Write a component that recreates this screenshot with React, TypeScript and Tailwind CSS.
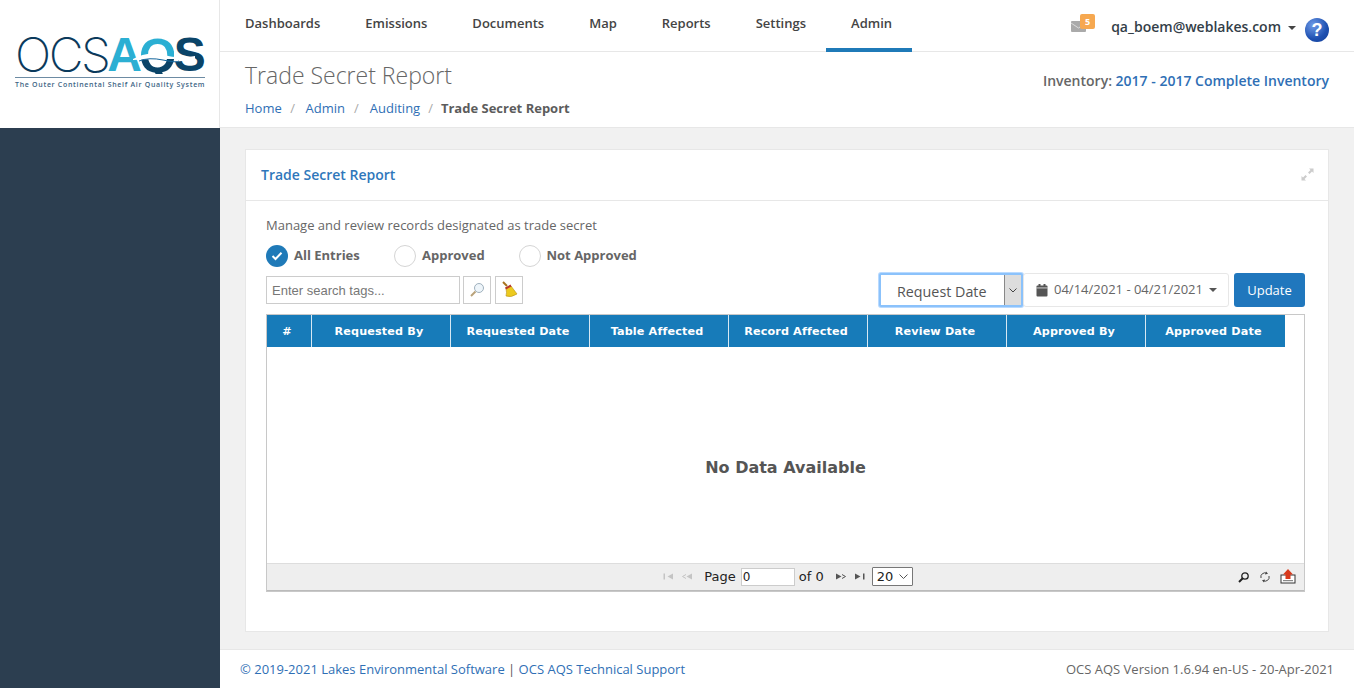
import React from "react";

const OS = { fontFamily: '"Open Sans", sans-serif' };
const DV = { fontFamily: '"DejaVu Sans", sans-serif' };

function Logo() {
  return (
    <div className="w-[190px] ml-[15px] pt-[34px]">
      <div className="relative flex items-center h-[42px]" style={{ fontFamily: '"Liberation Sans", sans-serif' }}>
        <span className="text-[48px] leading-[40px] text-[#0b3a5c] tracking-[-2.5px]" style={{ fontFamily: '"Inter", sans-serif', fontWeight: 200 }}>OCS</span>
        <span className="text-[48px] leading-[40px] font-bold tracking-[-3px] text-[#2bafd3] -ml-[1px]">A</span>
        <span className="text-[48px] leading-[40px] h-[38px] font-bold tracking-[-2.5px] bg-[linear-gradient(#2bafd3_60%,#0b4468_60%)] bg-clip-text text-transparent">Q</span>
        <span className="text-[48px] leading-[40px] font-bold tracking-[-1px] text-[#0b4468]">S</span>
        <svg className="absolute left-[118px] top-[16px]" width="62" height="14" viewBox="0 0 62 14">
          <path d="M0 9 Q14 1 30 5 T62 6 L62 9 Q44 9 30 9 T0 10Z" fill="#fff" />
          <path d="M6 11 Q16 7 30 10 T46 11" fill="none" stroke="#13659c" strokeWidth="1" />
        </svg>
      </div>
      <div className="mt-[1px] h-px bg-[#6d8ba3]" />
      <div className="mt-[2px] text-[7px] font-semibold leading-[10px] tracking-[0.7px] text-[#3d6484] whitespace-nowrap" style={OS}>The Outer Continental Shelf Air Quality System</div>
    </div>
  );
}

function Radio({ label, checked, cls }: { label: string; checked?: boolean; cls: string }) {
  return (
    <div className={`flex items-center ${cls}`}>
      {checked ? (
        <span className="w-[22px] h-[22px] rounded-full bg-[#1f7ab8] flex items-center justify-center">
          <svg width="12" height="10" viewBox="0 0 12 10"><path d="M1.5 5 L4.5 8 L10.5 1.8" fill="none" stroke="#fff" strokeWidth="2" /></svg>
        </span>
      ) : (
        <span className="w-[22px] h-[22px] rounded-full border border-[#d5d5d5] bg-white" />
      )}
      <span className="ml-[6px] text-[13px] font-bold text-[#666]">{label}</span>
    </div>
  );
}

const cols = [
  ["#", "w-[45px]"],
  ["Requested By", "w-[139px]"],
  ["Requested Date", "w-[139px]"],
  ["Table Affected", "w-[139px]"],
  ["Record Affected", "w-[139px]"],
  ["Review Date", "w-[139px]"],
  ["Approved By", "w-[139px]"],
  ["Approved Date", "w-[139px]"],
];

function PagerTri({ dir, last, dim }: { dir: "l" | "r"; last?: boolean; dim?: boolean }) {
  const c = dim ? "#c4c4c4" : "#555";
  return (
    <svg width="10" height="7" viewBox="0 0 10 7" className={dir === "l" ? "-scale-x-100" : ""}>
      <path d="M0 0.5 L5.5 3.5 L0 6.5Z" fill={c} />
      {last ? <rect x="8" y="0.5" width="1.5" height="6" fill={c} /> : <path d="M6 1.5 L9.5 3.5 L6 5.5" fill="none" stroke={c} strokeWidth="1" />}
    </svg>
  );
}

export default function App() {
  return (
    <div className="flex w-[1354px] h-[688px] overflow-hidden bg-[#f1f1f1] text-[#555]" style={OS}>
      <aside className="w-[220px] shrink-0 flex flex-col bg-[#2c3e50]">
        <div className="h-[128px] bg-white border-r border-[#e7e7e7]"><Logo /></div>
      </aside>
      <main className="flex-1 flex flex-col min-w-0">
        <div className="bg-white h-[128px] border-b border-[#e7e7e7]">
          <nav className="h-[52px] border-b border-[#e7e7e7] flex items-stretch pr-[25px]">
            <div className="flex pl-[5px]">
              {["Dashboards", "Emissions", "Documents", "Map", "Reports", "Settings"].map((n) => (
                <div key={n} className="px-[20px] h-[52px] pt-[14px] text-[13px] font-semibold leading-[18px] text-[#444] mr-[5px]">{n}</div>
              ))}
              <div className="pl-[25px] pr-[20px] -ml-[5px] h-[52px] pt-[14px] text-[13px] font-semibold leading-[18px] text-[#444] border-b-[4px] border-[#1f7ab8]">Admin</div>
            </div>
            <div className="ml-auto flex items-center pt-[2px]">
              <div className="relative w-[16px] h-[12px] mr-[24px]">
                <svg width="15" height="11" viewBox="0 0 15 11"><rect width="15" height="11" rx="1" fill="#aaa" /><path d="M0 2 L7.5 7 L15 2" fill="none" stroke="#e8e8e8" strokeWidth="0.8" /></svg>
                <span className="absolute -top-[7px] left-[9px] w-[15px] h-[15px] rounded-[2px] bg-[#f6a850] text-white text-[9px] font-bold leading-[15px] text-center">5</span>
              </div>
              <span className="text-[14px] font-semibold text-[#333e48]">qa_boem@weblakes.com</span>
              <span className="ml-[7px] border-x-[4px] border-x-transparent border-t-[4px] border-t-[#444] mt-[2px]" />
              <span className="ml-[9px] w-[24px] h-[24px] rounded-full bg-[radial-gradient(circle_at_35%_30%,#6f9ce8,#1d4fb0_60%,#143f96)] text-white text-[18px] font-bold leading-[24px] text-center mt-[6px]" style={{ fontFamily: '"Liberation Sans", sans-serif' }}>?</span>
            </div>
          </nav>
          <div className="flex justify-between pl-[25px] pr-[25px]">
            <div>
              <h1 className="text-[23px] font-light leading-[33px] text-[#666] mt-[7px]">Trade Secret Report</h1>
              <div className="flex items-center text-[13px] leading-[18px] mt-[7px]">
                <span className="text-[#2f6fb5]">Home</span><span className="mx-[8.5px] text-[#aaa]">/</span>
                <span className="ml-[2px] text-[#2f6fb5]">Admin</span><span className="mx-[9px] text-[#aaa]">/</span>
                <span className="ml-[2px] text-[#2f6fb5]">Auditing</span><span className="mx-[8px] text-[#aaa]">/</span>
                <span className="font-bold text-[#5c5c5c]">Trade Secret Report</span>
              </div>
            </div>
            <div className="text-[14px] font-semibold leading-[19px] mt-[19px]">
              <span className="text-[#666]">Inventory: </span><span className="text-[#2f6fb5]">2017 - 2017 Complete Inventory</span>
            </div>
          </div>
        </div>

        <div className="flex-1 px-[25px] pt-[21px]">
          <section className="h-[483px] bg-white border border-[#e7e7e7]">
            <div className="h-[51px] border-b border-[#e7e7e7] pl-[15px] pr-[14px] pb-[2px] flex items-center justify-between">
              <span className="text-[14px] font-semibold text-[#2f77bb]">Trade Secret Report</span>
              <svg width="13" height="13" viewBox="0 0 13 13" fill="#ccc"><path d="M8 0.5 H12.5 V5 L11 3.5 L8.5 6 L7 4.5 L9.5 2Z" /><path d="M5 12.5 H0.5 V8 L2 9.5 L4.5 7 L6 8.5 L3.5 11Z" /></svg>
            </div>
            <div className="px-[20px] pt-[15px]">
              <p className="text-[13px] leading-[18px] text-[#666]">Manage and review records designated as trade secret</p>
              <div className="flex mt-[11px] h-[22px]">
                <Radio label="All Entries" checked cls="w-[128px]" />
                <Radio label="Approved" cls="w-[124.5px]" />
                <Radio label="Not Approved" cls="" />
              </div>
              <div className="flex items-start justify-between mt-[6px] h-[41px] pr-[3px]">
                <div className="flex mt-[3px]">
                  <div className="w-[194px] h-[28px] border border-[#ccc] pl-[5px] text-[13px] leading-[28px] text-[#777]" style={{ fontFamily: '"Liberation Sans", sans-serif' }}>Enter search tags...</div>
                  <div className="ml-[3px] w-[28px] h-[28px] border border-[#ccc] flex items-center justify-center">
                    <svg width="16" height="16" viewBox="0 0 16 16"><circle cx="10" cy="6" r="4.5" fill="#eef5fa" stroke="#9fb0bd" /><path d="M6.5 9.5 L2 14" stroke="#b9a27a" strokeWidth="2" /></svg>
                  </div>
                  <div className="ml-[4px] w-[28px] h-[28px] border border-[#ccc] flex items-center justify-center">
                    <svg width="18" height="18" viewBox="0 0 18 18"><path d="M6 7 L11 5 L17 13 Q11 17 6 15 Q7 12 6 7Z" fill="#ecca1e" stroke="#b78f10" strokeWidth="0.6" /><path d="M5.5 7.5 L11 4.5" stroke="#b8382a" strokeWidth="2" /><path d="M7 5 L3 1" stroke="#a8741e" strokeWidth="2" /></svg>
                  </div>
                </div>
                <div className="flex items-center">
                  <div className="w-[144px] h-[34px] flex border-2 border-[#8bc2fb] rounded-[2px] shadow-[0_0_0_1px_#b9daff] bg-white">
                    <div className="flex-1 text-[14.3px] text-[#555] pl-[16px] leading-[34px]">Request Date</div>
                    <div className="w-[17px] bg-[#ddd] border-l border-[#888] flex items-center justify-center">
                      <svg width="8" height="5" viewBox="0 0 8 5"><path d="M0.5 0.5 L4 4 L7.5 0.5" fill="none" stroke="#444" /></svg>
                    </div>
                  </div>
                  <div className="w-[206px] h-[34px] border border-[#e7e7e7] rounded-[3px] flex items-center pl-[12px] text-[13px] text-[#666]">
                    <svg width="12" height="13" viewBox="0 0 12 13" fill="#555"><rect x="0.5" y="1.5" width="11" height="11" rx="1" /><rect x="2.5" y="0" width="2" height="3" /><rect x="7.5" y="0" width="2" height="3" /><rect x="0.5" y="3.6" width="11" height="0.7" fill="#fff" /></svg>
                    <span className="ml-[6px]">04/14/2021 - 04/21/2021</span>
                    <span className="ml-[6px] border-x-[4px] border-x-transparent border-t-[4px] border-t-[#555]" />
                  </div>
                  <div className="ml-[5px] w-[71px] h-[34px] rounded-[3px] bg-[#2077bd] text-white text-[13px] leading-[34px] text-center">Update</div>
                </div>
              </div>
              <div className="mr-[3px] h-[278px] border border-[#c8c8c8] flex flex-col">
                <div className="flex h-[32px] shrink-0">
                  {cols.map(([c, w], i) => (
                    <div key={c} className={`${w} bg-[#177bb9] text-white text-[11.2px] font-bold tracking-[0.15px] flex items-center justify-center pt-[3px] pr-[4px] ${i < 7 ? "border-r border-[#d7e8f3]" : ""}`} style={DV}>{c}</div>
                  ))}
                </div>
                <div className="flex-1 flex items-center justify-center pt-[25px] text-[16px] font-bold text-[#555]" style={DV}>No Data Available</div>
                <div className="relative h-[28px] bg-[#eee] border-t border-[#ddd] border-b border-b-[#bbb] flex items-center justify-center text-[13px] text-[#222] shrink-0 pb-[1px] pl-[5px]" style={DV}>
                  <div className="flex items-center gap-[9px] mr-[12px]"><PagerTri dir="l" last dim /><PagerTri dir="l" dim /></div>
                  <span>Page</span>
                  <div className="ml-[5px] w-[54px] h-[18px] border border-[#ccc] bg-white text-[12px] leading-[16px] pl-[1px]">0</div>
                  <span className="ml-[4px]">of 0</span>
                  <div className="flex items-center gap-[9px] ml-[12px]"><PagerTri dir="r" /><PagerTri dir="r" last /></div>
                  <div className="ml-[7px] w-[41px] h-[19px] border border-[#777] bg-white rounded-[1px] flex items-center justify-between px-[4px] text-[13px]">
                    <span>20</span>
                    <svg width="9" height="5" viewBox="0 0 9 5"><path d="M0.5 0.5 L4.5 4.5 L8.5 0.5" fill="none" stroke="#555" /></svg>
                  </div>
                  <div className="absolute right-[8px] top-[5px] flex items-center gap-[9px]">
                    <svg width="12" height="12" viewBox="0 0 12 12"><circle cx="7" cy="5" r="3.2" fill="none" stroke="#222" strokeWidth="1.3" /><path d="M4.5 7.5 L1 11" stroke="#222" strokeWidth="2" /></svg>
                    <svg width="12" height="12" viewBox="0 0 12 12" fill="none" stroke="#444"><path d="M2 7 A4 4 0 0 1 8 2.5 M10 5 A4 4 0 0 1 4 9.5" /><path d="M7 0.5 L9 2.8 L6 3.5 M5 11.5 L3 9.2 L6 8.5" fill="#444" stroke="none" /></svg>
                    <svg width="16" height="15" viewBox="0 0 16 15"><rect x="1" y="6" width="14" height="8" fill="#fff" stroke="#333" /><rect x="3" y="11" width="10" height="1.2" fill="#888" /><path d="M8 0 L13 5.5 H10.5 V10 H5.5 V5.5 H3Z" fill="#d93a1c" /></svg>
                  </div>
                </div>
              </div>
            </div>
          </section>
        </div>

        <footer className="h-[39px] bg-white border-t border-[#e7e7e7] flex items-center justify-between pl-[20px] pr-[20px] pt-[2px] text-[13px]">
          <div className="text-[#2f6fb5]">© 2019-2021 Lakes Environmental Software <span className="text-[#555]">|</span> OCS AQS Technical Support</div>
          <div className="text-[#666]">OCS AQS Version 1.6.94 en-US - 20-Apr-2021</div>
        </footer>
      </main>
    </div>
  );
}
